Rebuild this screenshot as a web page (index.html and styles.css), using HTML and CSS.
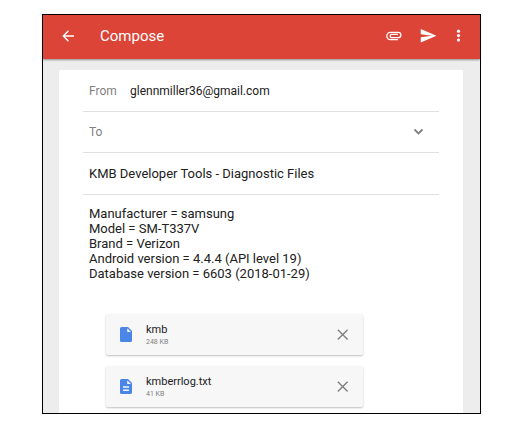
FILE: index.html
```html
<!DOCTYPE html>
<html lang="en">
<head>
<meta charset="utf-8">
<meta name="viewport" content="width=device-width, initial-scale=1">
<title>Compose</title>
<link rel="stylesheet" href="styles.css">
</head>
<body>
<div class="app">
  <header class="toolbar">
    <button class="icon-button" type="button" aria-label="Back">
      <svg width="16" height="16" viewBox="0 0 16 16" fill="none" stroke="currentColor" stroke-width="1.400"><path d="M13 8H2.500M7.500 2.800 2.300 8l5.200 5.200"/></svg>
    </button>
    <h1 class="title">Compose</h1>
    <button class="icon-button" type="button" aria-label="Attach file">
      <svg width="16" height="16" viewBox="0 0 16 16" fill="none" stroke="currentColor" stroke-width="1.300" stroke-linecap="round"><path d="M11.500 11.700H4.500a3.700 3.700 0 0 1 0-7.400h7.700a2.700 2.700 0 0 1 0 5.400H5.800a1.650 1.650 0 0 1 0-3.300h5.700"/></svg>
    </button>
    <button class="icon-button send" type="button" aria-label="Send">
      <svg width="18" height="18" viewBox="0 0 24 24" fill="currentColor"><path d="M1 20.500l21-9L1 2.500v7l15 2-15 2z"/></svg>
    </button>
    <button class="icon-button more" type="button" aria-label="More options">
      <svg width="16" height="16" viewBox="0 0 16 16" fill="currentColor"><circle cx="7.500" cy="3.200" r="1.600"/><circle cx="7.500" cy="7.600" r="1.600"/><circle cx="7.500" cy="12" r="1.600"/></svg>
    </button>
  </header>
  <main class="page">
    <form class="card">
      <div class="row">
        <label class="label" for="from">From</label>
        <input class="field" id="from" type="email" value="glennmiller36@gmail.com" readonly>
      </div>
      <div class="row recipients">
        <label class="label" for="to">To</label>
        <input class="field" id="to" type="email">
        <button class="icon-button expand" type="button" aria-label="Add Cc/Bcc">
          <svg width="16" height="16" viewBox="0 0 16 16" fill="none" stroke="currentColor" stroke-width="1.800"><path d="M3.500 5.500 7.500 9.500l4-4"/></svg>
        </button>
      </div>
      <div class="row">
        <input class="field subject" type="text" aria-label="Subject" value="KMB Developer Tools - Diagnostic Files">
      </div>
      <textarea class="message" rows="5" aria-label="Message" spellcheck="false">Manufacturer = samsung
Model = SM-T337V
Brand = Verizon
Android version = 4.4.4 (API level 19)
Database version = 6603 (2018-01-29)</textarea>
      <ul class="attachments">
        <li class="attachment">
          <svg class="file-icon" width="12" height="15" viewBox="0 0 12 15"><path fill="#4a86e8" d="M1.500 0H8l4 4v9.500a1.500 1.500 0 0 1-1.500 1.500h-9A1.500 1.500 0 0 1 0 13.500v-12A1.500 1.500 0 0 1 1.500 0z"/><path fill="#f7f7f7" d="M7.200 1.200V5H11z"/></svg>
          <div class="file">
            <span class="file-name">kmb</span>
            <span class="file-size">248 KB</span>
          </div>
          <button class="icon-button remove" type="button" aria-label="Remove kmb">
            <svg width="12" height="12" viewBox="0 0 12 12" fill="none" stroke="currentColor" stroke-width="1.400"><path d="M.8 .8l9.800 9.800M10.600 .8l-9.800 9.800"/></svg>
          </button>
        </li>
        <li class="attachment">
          <svg class="file-icon" width="12" height="15" viewBox="0 0 12 15"><path fill="#4a86e8" d="M1.500 0H8l4 4v9.500a1.500 1.500 0 0 1-1.500 1.500h-9A1.500 1.500 0 0 1 0 13.500v-12A1.500 1.500 0 0 1 1.500 0z"/><path fill="#f7f7f7" d="M7.200 1.200V5H11zM3 7.200h6v1.500H3zM3 10.400h6v1.500H3z"/></svg>
          <div class="file">
            <span class="file-name">kmberrlog.txt</span>
            <span class="file-size">41 KB</span>
          </div>
          <button class="icon-button remove" type="button" aria-label="Remove kmberrlog.txt">
            <svg width="12" height="12" viewBox="0 0 12 12" fill="none" stroke="currentColor" stroke-width="1.400"><path d="M.8 .8l9.800 9.800M10.600 .8l-9.800 9.800"/></svg>
          </button>
        </li>
      </ul>
    </form>
  </main>
</div>
</body>
</html>
```

FILE: styles.css
```css
* {
  box-sizing: border-box;
}

body {
  margin: 0;
  padding: 14px 31px 16px 42px;
  background: #fff;
  color: #212121;
  font-family: Roboto, "Liberation Sans", sans-serif;
  font-size: 12px;
}

.app {
  border: 1px solid #000;
  background: #ededed;
}

.toolbar {
  position: relative;
  display: flex;
  align-items: center;
  height: 44px;
  padding: 0 13px 3px 18px;
  background: #db4437;
  color: #fff;
  box-shadow: 0 1px 2px rgba(0, 0, 0, 0.4);
}

.title {
  flex: 1;
  margin: 0 0 0 23px;
  font-size: 15px;
  font-weight: 400;
  line-height: 20px;
}

.icon-button {
  display: flex;
  padding: 0;
  border: 0;
  background: none;
  color: inherit;
  cursor: pointer;
}

.send {
  margin-left: 18px;
}

.more {
  margin-left: 13px;
}

.page {
  padding: 11px 17px 0 16px;
}

.card {
  padding: 0 24px 6px;
  border-radius: 2px 2px 0 0;
  background: #fff;
}

.row {
  display: flex;
  align-items: center;
  height: 42px;
  padding: 0 12px 0 6px;
  border-bottom: 1px solid #e0e0e0;
}

.recipients {
  height: 41px;
}

.label {
  width: 41px;
  color: #808080;
}

.field {
  flex: 1;
  min-width: 0;
  padding: 0;
  border: 0;
  outline: 0;
  background: none;
  color: inherit;
  font: inherit;
}

.subject {
  font-size: 13px;
}

.expand,
.remove {
  color: #808080;
}

.message {
  display: block;
  width: 100%;
  margin-top: 11px;
  padding: 0 6px;
  border: 0;
  outline: 0;
  background: none;
  color: inherit;
  font: inherit;
  font-size: 13px;
  line-height: 15px;
  resize: none;
  overflow: hidden;
}

.attachments {
  display: grid;
  gap: 11px;
  margin: 33px 76px 0 23px;
  padding: 0;
  list-style: none;
}

.attachment {
  display: flex;
  align-items: center;
  height: 41px;
  padding: 0 14px;
  border-radius: 2px;
  background: #f7f7f7;
  box-shadow: 0 1px 2px rgba(0, 0, 0, 0.25);
}

.file {
  display: grid;
  flex: 1;
  margin-left: 14px;
}

.file-name {
  font-size: 11px;
  line-height: 14px;
}

.file-size {
  color: #808080;
  font-size: 7px;
  line-height: 10px;
}
```
